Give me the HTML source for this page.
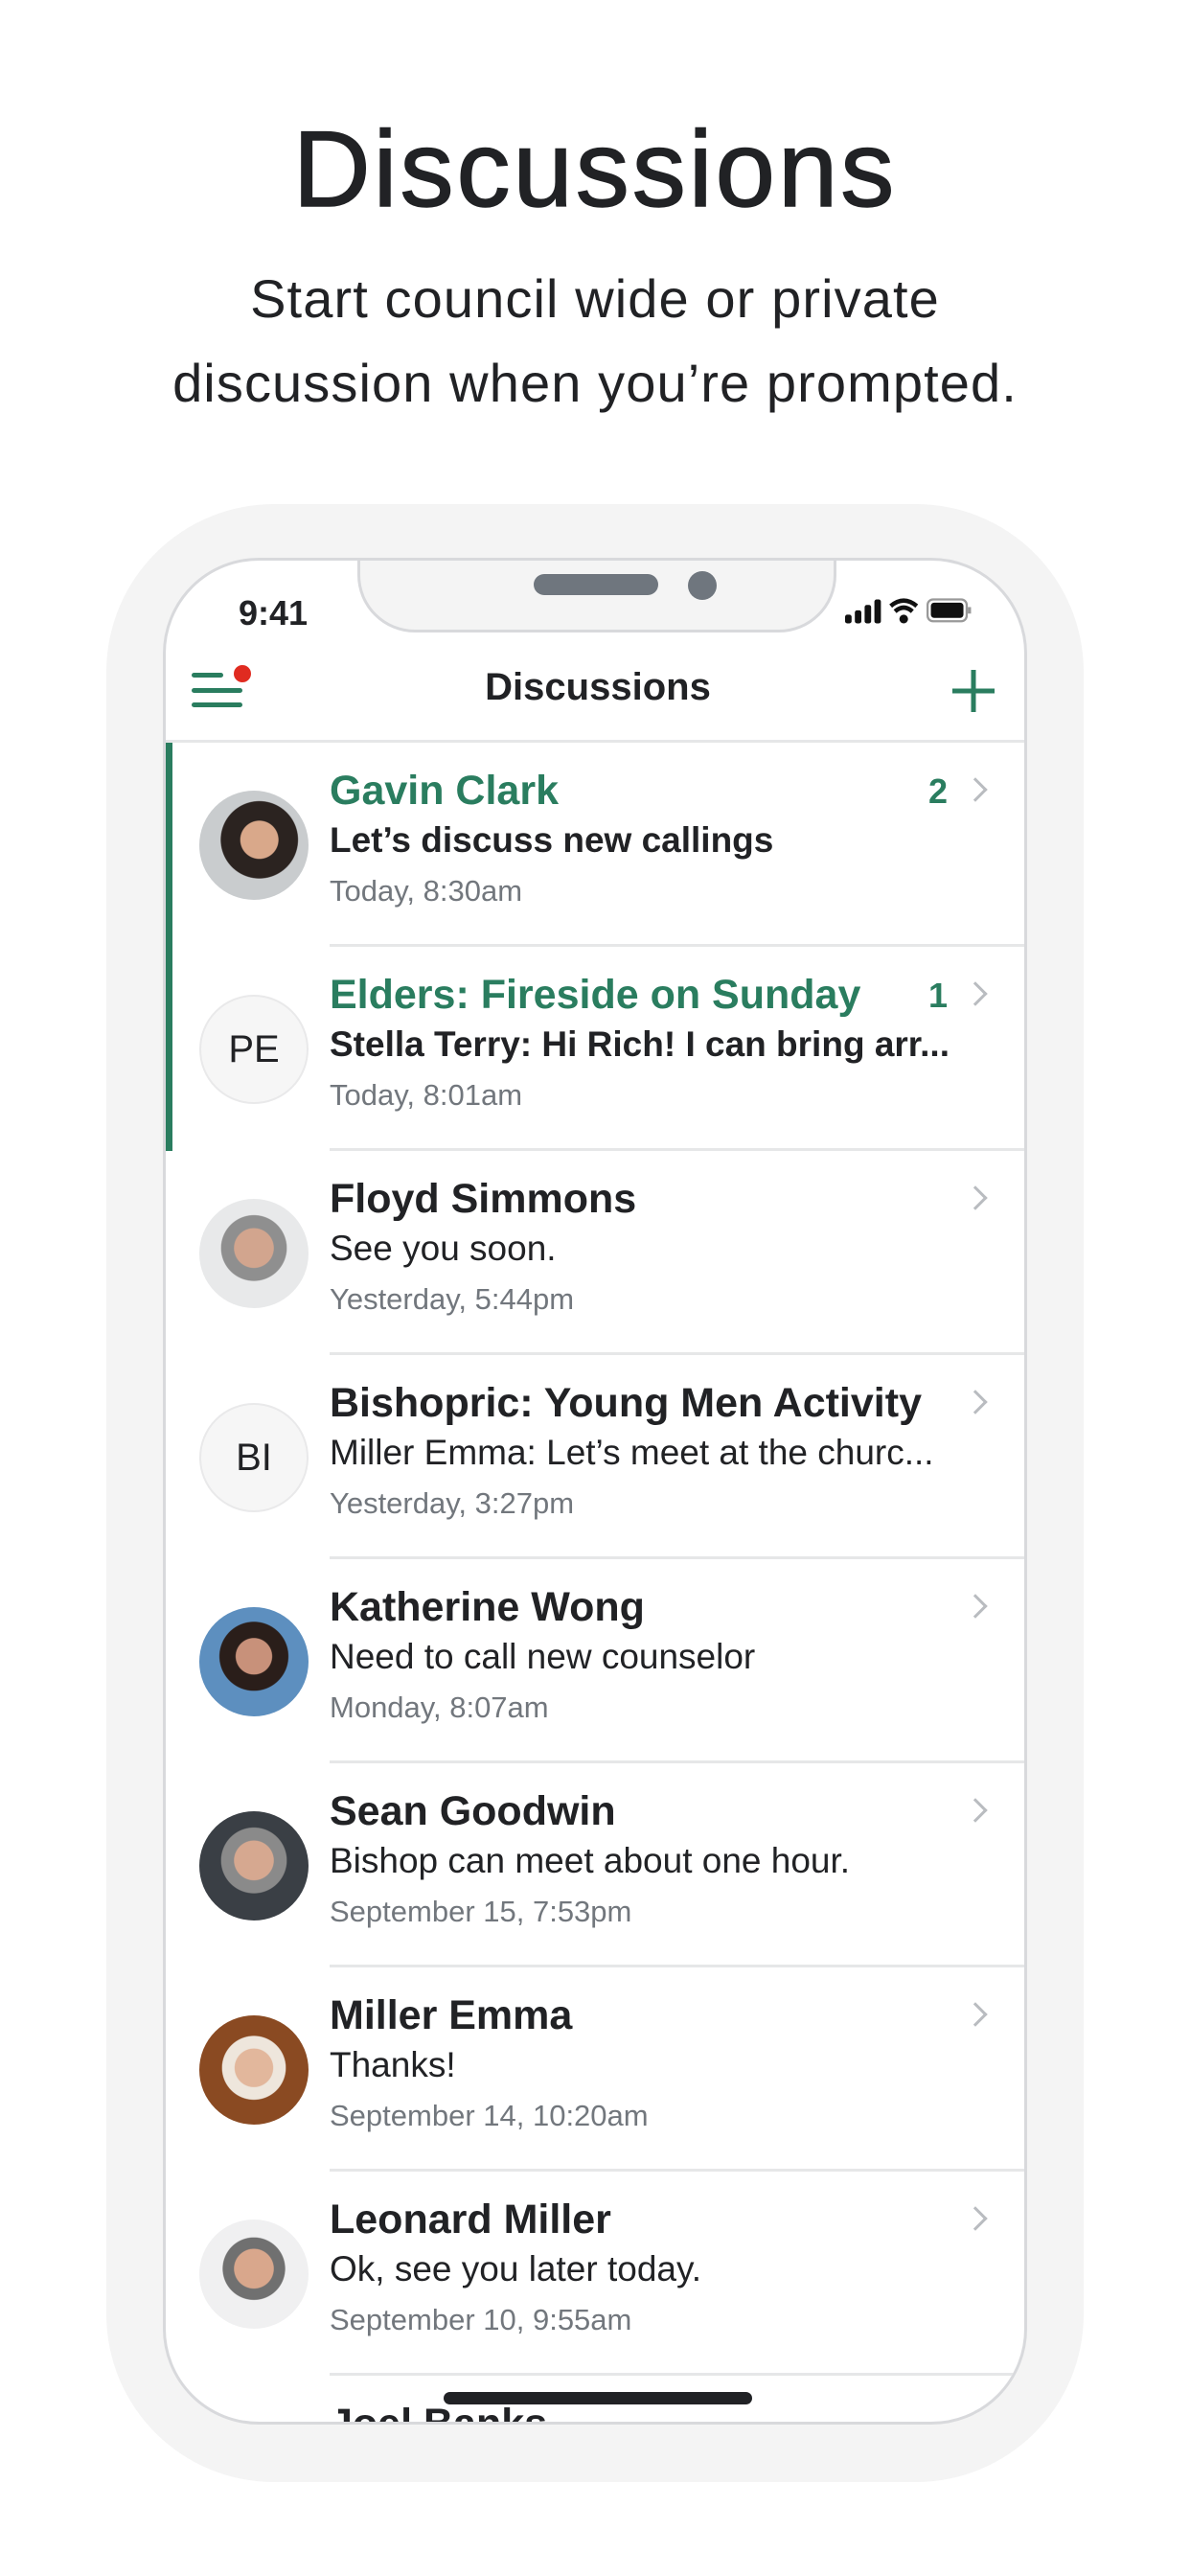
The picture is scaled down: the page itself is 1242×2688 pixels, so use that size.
<!DOCTYPE html>
<html><head><meta charset="utf-8"><style>
*{margin:0;padding:0;box-sizing:border-box}
body{width:1242px;height:2688px;background:#fff;font-family:"Liberation Sans",sans-serif;position:relative;overflow:hidden;color:#212225}
.h1{position:absolute;top:112px;width:100%;text-align:center;font-size:112px;letter-spacing:3px;color:#212225;-webkit-text-stroke:1.5px #212225}
.sub{position:absolute;top:268px;width:100%;text-align:center;font-size:56px;line-height:88px;color:#212225;letter-spacing:1.1px}
.outer{position:absolute;left:111px;top:526px;width:1020px;height:2064px;background:#f4f4f4;border-radius:175px}
.screen{position:absolute;left:170px;top:582px;width:902px;height:1948px;background:#fff;border:3px solid #d8d9dc;border-radius:100px;overflow:hidden}
.notch{position:absolute;left:200px;top:-3px;width:500px;height:78px;background:#f4f4f4;border:3px solid #d8d9dc;border-top:none;border-radius:0 0 60px 60px}
.pill{position:absolute;left:384px;top:14px;width:130px;height:22px;background:#6f767e;border-radius:11px}
.cam{position:absolute;left:545px;top:11px;width:30px;height:30px;background:#6f767e;border-radius:50%}
.row{position:absolute;left:0;width:902px;height:213px}
.av{position:absolute;left:35px;top:50px;width:114px;height:114px;border-radius:50%}
.ini{background:#f6f6f6;border:2px solid #e9e9ea;text-align:center;line-height:110px;font-size:40px;color:#212225}
.name{position:absolute;left:171px;top:26px;font-size:43px;font-weight:bold;white-space:nowrap}
.msg{position:absolute;left:171px;top:81px;font-size:37px;white-space:nowrap}
.date{position:absolute;left:171px;top:137px;font-size:31px;color:#72777d}
.g{color:#2a7d5f}
.cnt{position:absolute;right:86px;top:30px;font-size:36px;font-weight:bold;color:#2a7d5f}
.chev{position:absolute;right:48px;top:40px;width:18px;height:18px;border-right:3px solid #b9bcc0;border-top:3px solid #b9bcc0;transform:rotate(45deg)}
.div{position:absolute;left:171px;right:0;bottom:0;height:3px;background:#e6e7e8}
.bar{position:absolute;left:0;top:0;width:7px;height:213px;background:#2a7d5f}
</style></head><body>
<div class="h1">Discussions</div>
<div class="sub">Start council wide or private<br>discussion when you’re prompted.</div>
<div class="outer"></div>
<div class="screen">
<div class="notch"></div><div class="pill"></div><div class="cam"></div>
<div style="position:absolute;left:76px;top:34px;font-size:36px;font-weight:bold">9:41</div>
<svg style="position:absolute;left:702px;top:36px" width="150" height="34" viewBox="0 0 120 30">
<rect x="0" y="18" width="6" height="8" rx="2" fill="#111"/><rect x="9" y="14" width="6" height="12" rx="2" fill="#111"/><rect x="18" y="9" width="6" height="17" rx="2" fill="#111"/><rect x="27" y="4" width="6" height="22" rx="2" fill="#111"/>
<path d="M42 10 Q54 0 66 10 M46 15 Q54 8 62 15" stroke="#111" stroke-width="4" fill="none"/><circle cx="54" cy="22" r="4" fill="#111"/>
<rect x="76" y="4" width="36" height="20" rx="5" fill="none" stroke="#999" stroke-width="2"/><rect x="79" y="7" width="30" height="14" rx="3" fill="#111"/><rect x="113" y="11" width="3" height="6" fill="#999"/>
</svg>
<svg style="position:absolute;left:20px;top:100px" width="80" height="60"><rect x="7" y="17" width="33" height="5" rx="2.5" fill="#2a7d5f"/><rect x="7" y="33" width="53" height="5" rx="2.5" fill="#2a7d5f"/><rect x="7" y="48" width="53" height="5" rx="2.5" fill="#2a7d5f"/><circle cx="60" cy="18" r="9" fill="#e02b20"/></svg>
<div style="position:absolute;left:0;width:902px;top:110px;text-align:center;font-size:40px;font-weight:bold;color:#212225">Discussions</div>
<svg style="position:absolute;left:819px;top:112px" width="48" height="48"><path d="M24 2V46M2 24H46" stroke="#2a7d5f" stroke-width="5"/></svg>
<div style="position:absolute;left:0;right:0;top:187px;height:3px;background:#e6e7e8"></div>

<div class="row" style="top:190px"><div class="bar"></div><div class="av" style="background:radial-gradient(circle at 55% 45%,#d9a88a 0 22%,#2b2320 23% 45%,#c9ccce 46%)"></div><div class="name g">Gavin Clark</div><div class="cnt">2</div><div class="chev"></div><div class="msg" style="font-weight:bold">Let’s discuss new callings</div><div class="date">Today, 8:30am</div><div class="div"></div></div>
<div class="row" style="top:403px"><div class="bar"></div><div class="av ini">PE</div><div class="name g">Elders: Fireside on Sunday</div><div class="cnt">1</div><div class="chev"></div><div class="msg" style="font-weight:bold">Stella Terry: Hi Rich! I can bring arr...</div><div class="date">Today, 8:01am</div><div class="div"></div></div>
<div class="row" style="top:616px"><div class="av" style="background:radial-gradient(circle at 50% 45%,#d2a58e 0 24%,#8f8f8f 25% 40%,#e8e9ea 41%)"></div><div class="name">Floyd Simmons</div><div class="chev"></div><div class="msg">See you soon.</div><div class="date">Yesterday, 5:44pm</div><div class="div"></div></div>
<div class="row" style="top:829px"><div class="av ini">BI</div><div class="name">Bishopric: Young Men Activity</div><div class="chev"></div><div class="msg">Miller Emma: Let’s meet at the churc...</div><div class="date">Yesterday, 3:27pm</div><div class="div"></div></div>
<div class="row" style="top:1042px"><div class="av" style="background:radial-gradient(circle at 50% 45%,#c8917a 0 22%,#2a1e1a 23% 42%,#5d8fbf 43%)"></div><div class="name">Katherine Wong</div><div class="chev"></div><div class="msg">Need to call new counselor</div><div class="date">Monday, 8:07am</div><div class="div"></div></div>
<div class="row" style="top:1255px"><div class="av" style="background:radial-gradient(circle at 50% 45%,#d6a890 0 24%,#8a8a8a 25% 40%,#3a3f45 41%)"></div><div class="name">Sean Goodwin</div><div class="chev"></div><div class="msg">Bishop can meet about one hour.</div><div class="date">September 15, 7:53pm</div><div class="div"></div></div>
<div class="row" style="top:1468px"><div class="av" style="background:radial-gradient(circle at 50% 48%,#e2b79c 0 24%,#eee6dc 25% 40%,#8a4a22 41%)"></div><div class="name">Miller Emma</div><div class="chev"></div><div class="msg">Thanks!</div><div class="date">September 14, 10:20am</div><div class="div"></div></div>
<div class="row" style="top:1681px"><div class="av" style="background:radial-gradient(circle at 50% 45%,#d9a78c 0 24%,#707070 25% 38%,#f0f0f1 39%)"></div><div class="name">Leonard Miller</div><div class="chev"></div><div class="msg">Ok, see you later today.</div><div class="date">September 10, 9:55am</div><div class="div"></div></div>
<div class="row" style="top:1894px"><div class="av" style="background:#ccc"></div><div class="name">Joel Banks</div><div class="chev"></div></div>
<div style="position:absolute;left:290px;top:1911px;width:322px;height:13px;border-radius:7px;background:#212225"></div>
</div>
</body></html>
